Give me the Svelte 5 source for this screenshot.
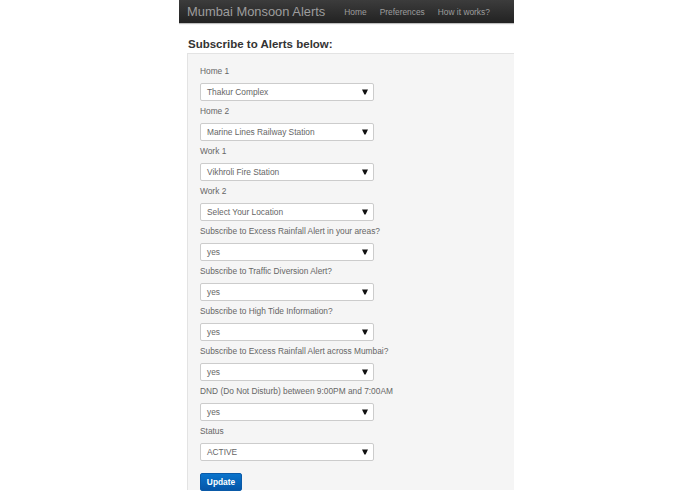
<script>
  // Form rows: label above a select, in page order
  const fields = [
    { label: 'Home 1', value: 'Thakur Complex' },
    { label: 'Home 2', value: 'Marine Lines Railway Station' },
    { label: 'Work 1', value: 'Vikhroli Fire Station' },
    { label: 'Work 2', value: 'Select Your Location' },
    { label: 'Subscribe to Excess Rainfall Alert in your areas?', value: 'yes' },
    { label: 'Subscribe to Traffic Diversion Alert?', value: 'yes' },
    { label: 'Subscribe to High Tide Information?', value: 'yes' },
    { label: 'Subscribe to Excess Rainfall Alert across Mumbai?', value: 'yes' },
    { label: 'DND (Do Not Disturb) between 9:00PM and 7:00AM', value: 'yes' },
    { label: 'Status', value: 'ACTIVE' }
  ];

  const links = ['Home', 'Preferences', 'How it works?'];
</script>

<div class="page">
  <nav class="navbar">
    <span class="brand">Mumbai Monsoon Alerts</span>
    {#each links as link}
      <span class="nav-link">{link}</span>
    {/each}
  </nav>

  <h4 class="title">Subscribe to Alerts below:</h4>

  <form class="well">
    {#each fields as f}
      <div class="group">
        <div class="label">{f.label}</div>
        <div class="select">
          <span>{f.value}</span>
          <svg class="caret" width="6" height="6" viewBox="0 0 6 6"><path d="M0 .5h6L3.6 5.5H2.4z" fill="#111" /></svg>
        </div>
      </div>
    {/each}
    <button class="update" type="button">Update</button>
  </form>
</div>

<style>
  :global(body) {
    background: #fff;
    font-family: "Liberation Sans", Arial, sans-serif;
    overflow: hidden;
  }

  .page {
    width: 335px;
    height: 494px;
    margin-left: 179px;
    overflow: hidden;
  }

  .navbar {
    height: 23px;
    display: flex;
    align-items: center;
    padding-left: 8px;
    white-space: nowrap;
    background: linear-gradient(#3c3c3c, #222);
    box-shadow: 0 1px 1px rgba(0, 0, 0, 0.25);
  }

  .brand {
    font-size: 12.9px;
    color: #9d9d9d;
    margin-right: 19px;
  }

  .nav-link {
    font-size: 8.4px;
    color: #9d9d9d;
    margin-right: 13px;
  }

  .title {
    margin: 14px 0 0 9px;
    height: 16px;
    line-height: 15px;
    font-size: 11.5px;
    font-weight: bold;
    color: #333;
  }

  .well {
    margin: 0 0 0 8px;
    height: 437px;
    box-sizing: border-box;
    padding: 11px 0 0 12px;
    background: #f5f5f5;
    border-top: 1px solid #e3e3e3;
    border-left: 1px solid #e3e3e3;
  }

  .group {
    height: 40px;
  }

  .label {
    height: 18px;
    line-height: 13px;
    font-size: 8.35px;
    color: #666;
  }

  .select {
    width: 174px;
    height: 18px;
    box-sizing: border-box;
    display: flex;
    align-items: center;
    justify-content: space-between;
    padding: 0 5px 0 6px;
    background: #fff;
    border: 1px solid #ccc;
    border-radius: 2px;
    font-size: 8.35px;
    color: #666;
  }

  .update {
    display: block;
    width: 42px;
    height: 18px;
    margin-top: 8px;
    padding: 0;
    border: 1px solid #0a5aa8;
    border-radius: 2px;
    background: linear-gradient(#0a74cc, #0556a8);
    color: #fff;
    font-family: inherit;
    font-size: 8.35px;
    font-weight: bold;
  }
</style>
